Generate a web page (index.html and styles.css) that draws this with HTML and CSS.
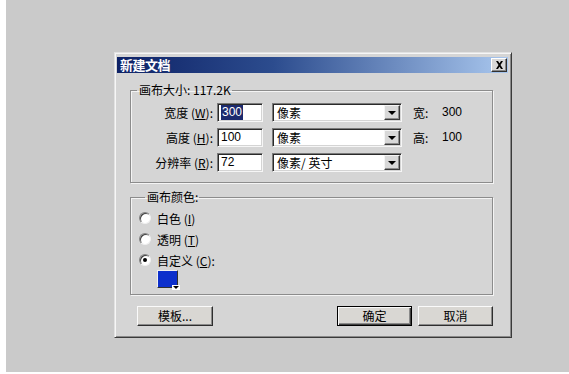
FILE: index.html
```html
<!DOCTYPE html>
<html lang="zh">
<head>
<meta charset="utf-8">
<title>新建文档</title>
<link rel="stylesheet" href="styles.css">
</head>
<body>
<div class="desk">
  <div class="dialog">
    <div class="titlebar">
      <span class="title">新建文档</span>
      <span class="close">
        <svg width="9" height="8" viewBox="0 0 9 8"><path d="M1 0h2l1.5 2.2L6 0h2L5.5 4 8 8H6L4.5 5.8 3 8H1l2.5-4z" fill="#000"/></svg>
      </span>
    </div>
    <div class="body">
      <fieldset class="group size">
        <legend>画布大小: 117.2K</legend>
        <div class="grid">
          <label class="lbl">宽度 (<u>W</u>):</label>
          <div class="field num"><span class="sel">300</span></div>
          <div class="field combo"><span class="val">像素</span><span class="drop"><i></i></span></div>
          <div class="info"><span class="k">宽:</span><span class="v">300</span></div>

          <label class="lbl">高度 (<u>H</u>):</label>
          <div class="field num"><span>100</span></div>
          <div class="field combo"><span class="val">像素</span><span class="drop"><i></i></span></div>
          <div class="info"><span class="k">高:</span><span class="v">100</span></div>

          <label class="lbl">分辨率 (<u>R</u>):</label>
          <div class="field num"><span>72</span></div>
          <div class="field combo"><span class="val">像素/ 英寸</span><span class="drop"><i></i></span></div>
          <div class="info"></div>
        </div>
      </fieldset>
      <fieldset class="group color">
        <legend>画布颜色:</legend>
        <div class="radio"><span class="dot"></span><span>白色 (<u>I</u>)</span></div>
        <div class="radio"><span class="dot"></span><span>透明 (<u>T</u>)</span></div>
        <div class="radio"><span class="dot on"></span><span>自定义 (<u>C</u>):</span></div>
        <div class="swatch"><svg class="arr" width="6" height="4" viewBox="0 0 6 4"><path d="M0 0h6L3 3z" fill="#000"/></svg></div>
      </fieldset>
      <div class="buttons">
        <div class="btn">模板...</div>
        <div class="right">
          <div class="btn def">确定</div>
          <div class="btn">取消</div>
        </div>
      </div>
    </div>
  </div>
</div>
</body>
</html>
```
FILE: styles.css
```css
html, body {
  margin: 0;
  padding: 0;
  background: #ffffff;
}
body {
  font-family: "Noto Sans CJK SC", "Liberation Sans", sans-serif;
  font-size: 12px;
  color: #000;
}
.desk {
  margin-left: 6px;
  width: 563px;
  height: 372px;
  background: #cacaca;
  box-sizing: border-box;
  padding-top: 52px;
  padding-left: 108px;
}
.dialog {
  width: 398px;
  height: 286px;
  box-sizing: border-box;
  background: #d5d5d5;
  border: 1px solid;
  border-color: #e2e2e2 #3a3a3a #3a3a3a #e2e2e2;
  box-shadow: inset 1px 1px 0 #f6f6f6, inset -1px -1px 0 #8a8a8a;
  padding: 4px 3px 0 2px;
}
.titlebar {
  height: 16px;
  background: linear-gradient(to right, #0e2266 0%, #2c4c8e 40%, #a9c7ee 100%);
  display: flex;
  align-items: center;
  justify-content: space-between;
  padding: 0 1px 0 3px;
}
.title {
  color: #fff;
  font-weight: bold;
  font-size: 13px;
  line-height: 16px;
  letter-spacing: -0.5px;
}
.close {
  width: 16px;
  height: 14px;
  box-sizing: border-box;
  background: #d8d8d8;
  border: 1px solid;
  border-color: #fff #303030 #303030 #fff;
  box-shadow: inset -1px -1px 0 #888;
  display: flex;
  align-items: center;
  justify-content: center;
}
.body {
  padding: 0 15px 0 13px;
}
.group {
  margin: 9px 0 0 0;
  padding: 0;
  border: 1px solid #8c8c8c;
  box-shadow: inset 1px 1px 0 #f4f4f4, 1px 1px 0 #f4f4f4;
  min-width: 0;
}
.group legend {
  margin-left: 6px;
  padding: 0 1px 0 2px;
  line-height: 16px;
  font-size: 12px;
}
.size .grid {
  display: grid;
  grid-template-columns: 82px 46px 135px 1fr;
  grid-auto-rows: 19px;
  column-gap: 4px;
  row-gap: 6px;
  padding: 5px 0 10px 0;
}
.lbl {
  text-align: right;
  line-height: 19px;
  white-space: nowrap;
}
.lbl u, .radio u {
  text-decoration: underline;
}
.field {
  box-sizing: border-box;
  background: #fff;
  border: 1px solid;
  border-color: #7a7a7a #f6f6f6 #f6f6f6 #7a7a7a;
  box-shadow: inset 1px 1px 0 #2a2a2a, inset -1px -1px 0 #d4d4d4;
  display: flex;
  align-items: center;
  line-height: 15px;
}
.num {
  padding-left: 3px;
  font-family: "Liberation Sans", sans-serif;
  font-size: 12px;
}
.num .sel {
  background: #1c2a6e;
  color: #fff;
  padding: 0 1px;
}
.combo {
  margin-left: 5px;
  justify-content: space-between;
  padding: 1px 1px 1px 4px;
}
.combo .val {
  white-space: nowrap;
}
.drop {
  width: 16px;
  height: 15px;
  box-sizing: border-box;
  background: #d8d8d8;
  border: 1px solid;
  border-color: #f4f4f4 #3a3a3a #3a3a3a #f4f4f4;
  box-shadow: inset -1px -1px 0 #8c8c8c;
  display: flex;
  align-items: center;
  justify-content: center;
}
.drop i {
  width: 0;
  height: 0;
  border-left: 4px solid transparent;
  border-right: 4px solid transparent;
  border-top: 4px solid #000;
}
.info {
  padding-left: 7px;
  line-height: 19px;
  display: flex;
  white-space: nowrap;
}
.info .k {
  width: 29px;
}
.info .v {
  font-family: "Liberation Sans", sans-serif;
}
.color {
  margin-top: 6px;
  padding: 5px 0 6px 8px;
}
.radio {
  display: flex;
  align-items: center;
  gap: 6px;
  height: 16px;
  margin-bottom: 5px;
}
.dot {
  width: 12px;
  height: 12px;
  box-sizing: border-box;
  border-radius: 50%;
  background: #fff;
  border: 1px solid;
  border-color: #808080 #f0f0f0 #f0f0f0 #808080;
  box-shadow: inset 1px 1px 0 #404040;
  position: relative;
}
.dot.on::after {
  content: "";
  position: absolute;
  left: 3px;
  top: 3px;
  width: 4px;
  height: 4px;
  border-radius: 50%;
  background: #000;
}
.swatch {
  margin: -3px 0 0 18px;
  width: 21px;
  height: 18px;
  box-sizing: border-box;
  background: #0c2fcc;
  border: 1px solid;
  border-color: #f0f0f0 #303030 #303030 #f0f0f0;
  position: relative;
}
.swatch .arr {
  position: absolute;
  right: -3px;
  bottom: -3px;
  background: #fff;
  padding: 1px 1px 0 1px;
}
.buttons {
  display: flex;
  justify-content: space-between;
  margin-top: 11px;
  padding-left: 7px;
}
.right {
  display: flex;
  gap: 6px;
}
.btn {
  width: 76px;
  height: 20px;
  box-sizing: border-box;
  background: #d9d7d3;
  border: 1px solid;
  border-color: #fafafa #2e2e2e #2e2e2e #fafafa;
  box-shadow: inset -1px -1px 0 #8a8a8a;
  text-align: center;
  line-height: 18px;
  font-size: 12px;
}
.right .btn {
  width: 75px;
}
.btn.def {
  border: 1px solid #000;
  box-shadow: inset 1px 1px 0 #fafafa, inset -1px -1px 0 #404040, inset -2px -2px 0 #8a8a8a;
}
```
